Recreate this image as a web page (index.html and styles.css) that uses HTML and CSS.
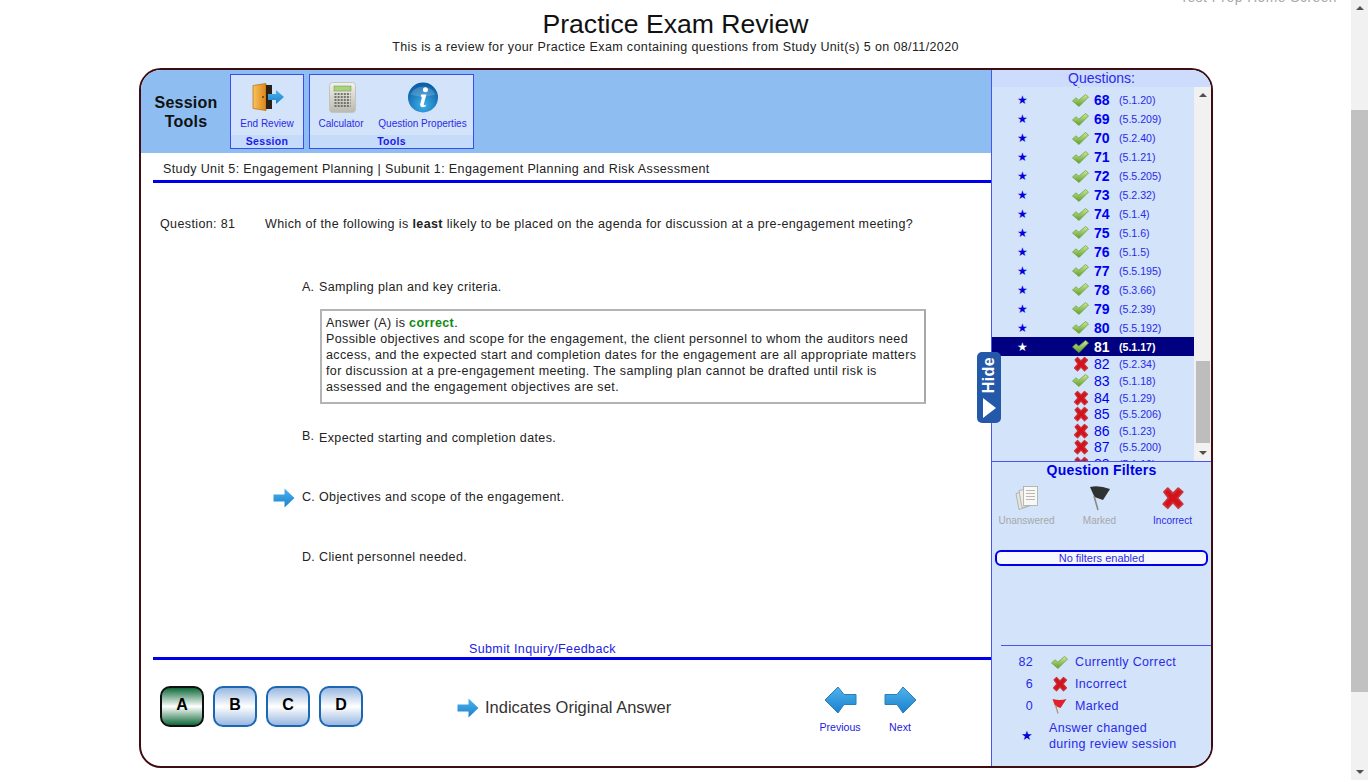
FILE: index.html
```html
<!DOCTYPE html>
<html lang="en">
<head>
    <meta charset="UTF-8">
    <meta name="viewport" content="width=device-width, initial-scale=1.0">
    <title>Practice Exam Review</title>
    <link rel="stylesheet" href="styles.css">
</head>
<body>
    <svg class="defs" width="0" height="0">
        <defs>
            <linearGradient id="g-check" x1="0" y1="0" x2="0" y2="1">
                <stop offset="0" stop-color="#cfe89a"/>
                <stop offset="1" stop-color="#5f9e2c"/>
            </linearGradient>
            <linearGradient id="g-arrow" x1="0" y1="0" x2="0" y2="1">
                <stop offset="0" stop-color="#4db4ee"/>
                <stop offset="1" stop-color="#1b80cc"/>
            </linearGradient>
            <linearGradient id="g-door" x1="0" y1="0" x2="1" y2="0">
                <stop offset="0" stop-color="#fbc25a"/>
                <stop offset="1" stop-color="#d9861c"/>
            </linearGradient>
            <linearGradient id="g-calc" x1="0" y1="0" x2="0" y2="1">
                <stop offset="0" stop-color="#f2f2ec"/>
                <stop offset="1" stop-color="#b9b9b0"/>
            </linearGradient>
            <radialGradient id="g-info" cx="0.5" cy="0.75" r="0.7">
                <stop offset="0" stop-color="#3fb0ea"/>
                <stop offset="1" stop-color="#0b5ea6"/>
            </radialGradient>
            <symbol id="i-check" viewBox="0 0 17 13">
                <path d="M0.5 7 L4 3.8 L6.8 6.2 L13.5 0.5 L16.5 3 L7 12.5 Z" fill="url(#g-check)" stroke="#6fa53a" stroke-width="0.8" stroke-linejoin="round"/>
            </symbol>
            <symbol id="i-cross" viewBox="0 0 16 16">
                <path d="M2 4 L4.5 1.5 L8 5 L11.5 1.5 L14.5 4 L11 8 L14.5 12 L11.5 14.8 L8 11 L4.5 14.8 L1.5 12 L5 8 Z" fill="#d4121c" stroke="#c9343a" stroke-width="1.2" stroke-linejoin="round"/>
            </symbol>
            <symbol id="i-right" viewBox="0 0 22 20">
                <path d="M0.5 6.5 H11.5 V0.5 L21.5 10 L11.5 19.5 V13.5 H0.5 Z" fill="url(#g-arrow)"/>
            </symbol>
            <symbol id="i-nav" viewBox="0 0 33 28">
                <path d="M1 14 L14 1 L20 8.5 H32 V18.5 H20 L14 27 Z" fill="url(#g-arrow)" stroke="#2a7fb8" stroke-width="1" stroke-linejoin="round"/>
            </symbol>
        </defs>
    </svg>

    <div class="page">
        <a class="home-link">Test Prep Home Screen</a>
        <header class="page-head">
            <h1>Practice Exam Review</h1>
            <p>This is a review for your Practice Exam containing questions from Study Unit(s) 5 on 08/11/2020</p>
        </header>

        <div class="exam">
            <section class="main-col">
                <div class="toolbar">
                    <div class="toolbar-title">Session<br>Tools</div>
                    <div class="tool-group group-session">
                        <div class="tool-items">
                            <div class="tool">
                                <svg class="door" width="33" height="31" viewBox="0 0 33 31">
                                    <path d="M1 3.5 L14 1.5 V28.5 L1 26.5 Z" fill="url(#g-door)" stroke="#b36f14" stroke-width="0.7"/>
                                    <path d="M14 3 H20 V27 H14 Z" fill="#2a2018"/>
                                    <circle cx="11" cy="15" r="1" fill="#6a3c08"/>
                                    <path d="M16 12 H24 V8 L32 15 L24 22 V18 H16 Z" fill="url(#g-arrow)"/>
                                </svg>
                                <span>End Review</span>
                            </div>
                        </div>
                        <div class="group-name">Session</div>
                    </div>
                    <div class="tool-group group-tools">
                        <div class="tool-items">
                            <div class="tool tool-calc">
                                <svg class="calc" width="27" height="31" viewBox="0 0 27 31">
                                    <rect x="0.5" y="0.5" width="26" height="30" rx="3" fill="url(#g-calc)" stroke="#c4c4bc"/>
                                    <rect x="5" y="4" width="17" height="5" fill="#a9d27a" stroke="#6f8a58" stroke-width="0.5"/>
                                    <path d="M5.5 12 H21.5 M5.5 15 H21.5 M5.5 18 H21.5 M5.5 21 H21.5 M5.5 24 H21.5" stroke="#55554f" stroke-width="1.7" stroke-dasharray="2 1.1"/>
                                </svg>
                                <span>Calculator</span>
                            </div>
                            <div class="tool tool-props">
                                <svg width="32" height="32" viewBox="0 0 32 32">
                                    <circle cx="16" cy="16" r="15.5" fill="url(#g-info)"/>
                                    <path d="M3 13 A13.5 11 0 0 1 29 13 A20 9 0 0 1 3 13 Z" fill="#fff" opacity="0.18"/>
                                    <circle cx="18.5" cy="8" r="2.6" fill="#fff"/>
                                    <path d="M14 13 H19.5 L16.8 23 Q16.6 24.6 19 23.4 L18.6 25.4 Q13 27.4 13 23.6 L14.9 15.2 H13.6 Z" fill="#fff"/>
                                </svg>
                                <span>Question Properties</span>
                            </div>
                        </div>
                        <div class="group-name">Tools</div>
                    </div>
                </div>

                <div class="unit-title">Study Unit 5: Engagement Planning | Subunit 1: Engagement Planning and Risk Assessment</div>

                <div class="question">
                    <div class="question-no">Question: 81</div>
                    <div class="question-text">Which of the following is <b>least</b> likely to be placed on the agenda for discussion at a pre-engagement meeting?</div>
                </div>

                <div class="options">
                    <div class="option option-a">
                        <span class="opt-mark"></span><span class="opt-letter">A.</span><span>Sampling plan and key criteria.</span>
                    </div>
                    <div class="explain">
                        Answer (A) is <b class="correct">correct</b>.<br>
                        Possible objectives and scope for the engagement, the client personnel to whom the auditors need access, and the expected start and completion dates for the engagement are all appropriate matters for discussion at a pre-engagement meeting. The sampling plan cannot be drafted until risk is assessed and the engagement objectives are set.
                    </div>
                    <div class="option option-b">
                        <span class="opt-mark"></span><span class="opt-letter">B.</span><span>Expected starting and completion dates.</span>
                    </div>
                    <div class="option option-c">
                        <span class="opt-mark"><svg width="22" height="20"><use href="#i-right"/></svg></span><span class="opt-letter">C.</span><span>Objectives and scope of the engagement.</span>
                    </div>
                    <div class="option option-d">
                        <span class="opt-mark"></span><span class="opt-letter">D.</span><span>Client personnel needed.</span>
                    </div>
                </div>

                <div class="feedback">Submit Inquiry/Feedback</div>

                <div class="bottom-bar">
                    <div class="answer-btns">
                        <div class="answer-btn picked">A</div>
                        <div class="answer-btn">B</div>
                        <div class="answer-btn">C</div>
                        <div class="answer-btn">D</div>
                    </div>
                    <div class="legend-arrow">
                        <svg width="22" height="20"><use href="#i-right"/></svg>
                        <span>Indicates Original Answer</span>
                    </div>
                    <div class="nav-btns">
                        <div class="nav-btn">
                            <svg width="33" height="28"><use href="#i-nav"/></svg>
                            <span>Previous</span>
                        </div>
                        <div class="nav-btn">
                            <svg class="flip" width="33" height="28"><use href="#i-nav"/></svg>
                            <span>Next</span>
                        </div>
                    </div>
                </div>
            </section>

            <div class="hide-tab"><span class="hide-text">Hide</span><span class="hide-arrow"></span></div>

            <aside class="side">
                <div class="side-head">Questions:</div>
                <div class="list-wrap">
                    <div class="q-list" id="q-list"></div>
                    <div class="list-scroll">
                        <span class="arrow-up"></span>
                        <div class="list-track"><div class="list-thumb"></div></div>
                        <span class="arrow-down"></span>
                    </div>
                </div>

                <div class="filters">
                    <div class="filters-title">Question Filters</div>
                    <div class="filter-items">
                        <div class="filter off">
                            <svg width="26" height="25" viewBox="0 0 26 25">
                                <path d="M2 8 L12 5 L14 21 L5 24 Z" fill="#e4e4de" stroke="#a0a096" stroke-width="0.7"/>
                                <path d="M5 5 L15 3 L17 20 L8 22 Z" fill="#eeeeea" stroke="#a0a096" stroke-width="0.7"/>
                                <rect x="9.5" y="1" width="14" height="19" fill="#f8f8f6" stroke="#a0a096" stroke-width="0.7"/>
                                <path d="M12 5 H21 M12 8 H21 M12 11 H21 M12 14 H21" stroke="#b8b8b0"/>
                            </svg>
                            <span>Unanswered</span>
                        </div>
                        <div class="filter off">
                            <svg width="22" height="26" viewBox="0 0 22 26">
                                <path d="M1 2 Q10 0 21 4 L14 15 L5.5 12 Z" fill="#2e3230"/>
                                <path d="M5 11 L9 25" stroke="#8a8a80" stroke-width="1.6"/>
                            </svg>
                            <span>Marked</span>
                        </div>
                        <div class="filter">
                            <svg width="24" height="24" viewBox="0 0 16 16"><use href="#i-cross"/></svg>
                            <span>Incorrect</span>
                        </div>
                    </div>
                    <div class="filter-status">No filters enabled</div>
                </div>

                <div class="summary">
                    <div class="sum-row">
                        <span class="sum-num">82</span>
                        <span class="sum-icon"><svg width="17" height="13"><use href="#i-check"/></svg></span>
                        <span>Currently Correct</span>
                    </div>
                    <div class="sum-row">
                        <span class="sum-num">6</span>
                        <span class="sum-icon"><svg width="16" height="16"><use href="#i-cross"/></svg></span>
                        <span>Incorrect</span>
                    </div>
                    <div class="sum-row">
                        <span class="sum-num">0</span>
                        <span class="sum-icon">
                            <svg width="15" height="16" viewBox="0 0 15 16">
                                <path d="M0.5 1 Q8 3 14.5 1 L8.5 10 L3 8 Z" fill="#e0202a"/>
                                <path d="M3.5 7 L6 15.5" stroke="#b09a70" stroke-width="1.3"/>
                            </svg>
                        </span>
                        <span>Marked</span>
                    </div>
                    <div class="sum-note">
                        <span class="sum-star">★</span>
                        <span>Answer changed<br>during review session</span>
                    </div>
                </div>
            </aside>
        </div>
    </div>

    <div class="page-scroll">
        <span class="arrow-up"></span>
        <div class="page-track"><div class="page-thumb"></div></div>
        <span class="arrow-down"></span>
    </div>

    <script src="list.js"></script>
</body>
</html>
```

FILE: list.js
```js
// question list rows, short rows are the ones after the current question
const questions = [
    [67, '5.1.12', 'check', 'first'],
    [68, '5.1.20', 'check'], [69, '5.5.209', 'check'], [70, '5.2.40', 'check'],
    [71, '5.1.21', 'check'], [72, '5.5.205', 'check'], [73, '5.2.32', 'check'],
    [74, '5.1.4', 'check'], [75, '5.1.6', 'check'], [76, '5.1.5', 'check'],
    [77, '5.5.195', 'check'], [78, '5.3.66', 'check'], [79, '5.2.39', 'check'],
    [80, '5.5.192', 'check'], [81, '5.1.17', 'check', 'current'],
    [82, '5.2.34', 'cross', 'short'], [83, '5.1.18', 'check', 'short'],
    [84, '5.1.29', 'cross', 'short'], [85, '5.5.206', 'cross', 'short'],
    [86, '5.1.23', 'cross', 'short'], [87, '5.5.200', 'cross', 'short'],
    [88, '5.1.19', 'cross', 'short']
];

const list = document.getElementById('q-list');
list.innerHTML = questions.map(function (q) {
    const size = q[2] === 'check' ? 'width="17" height="13"' : 'width="16" height="16"';
    const star = q[3] === 'short' ? '' : '★';
    return '<div class="q-row ' + (q[3] || '') + '">' +
        '<span class="q-star">' + star + '</span>' +
        '<span class="q-icon"><svg ' + size + '><use href="#i-' + q[2] + '"/></svg></span>' +
        '<span class="q-num">' + q[0] + '</span>' +
        '<span class="q-ref">(' + q[1] + ')</span>' +
        '</div>';
}).join('');
```

FILE: styles.css
```css
* {
    box-sizing: border-box;
}
html, body {
    height: 100%;
    margin: 0;
}
body {
    display: flex;
    overflow: hidden;
    background: #fff;
    color: #222;
    font-family: "Liberation Sans", Arial, sans-serif;
    font-size: 12.5px;
    letter-spacing: .38px;
}
.defs {
    position: absolute;
}
.page {
    position: relative;
    flex: 1;
}
.home-link {
    position: absolute;
    top: -10px;
    right: 14px;
    color: #a8a8a8;
    font-size: 13.8px;
    letter-spacing: .5px;
}
.page-head {
    height: 68px;
    padding-top: 9px;
    text-align: center;
}
.page-head h1 {
    margin: 0;
    color: #111;
    font-size: 26.6px;
    font-weight: normal;
    line-height: 30px;
    letter-spacing: 0;
}
.page-head p {
    margin: 1px 0 0;
    line-height: 15px;
}

/* exam frame */
.exam {
    position: relative;
    display: flex;
    width: 1074px;
    height: 700px;
    margin-left: 139px;
    border: 2px solid #3e0d12;
    border-radius: 22px;
    overflow: hidden;
}
.main-col {
    display: flex;
    flex-direction: column;
    width: 850px;
}
.toolbar {
    display: flex;
    align-items: flex-start;
    gap: 5px;
    height: 83px;
    padding: 4px 0 0 0;
    background: #8ebdf2;
}
.toolbar-title {
    width: 84px;
    padding-top: 19px;
    padding-left: 6px;
    color: #111;
    font-size: 16px;
    font-weight: bold;
    line-height: 19px;
    text-align: center;
    letter-spacing: .2px;
}
.tool-group {
    display: flex;
    flex-direction: column;
    height: 75px;
    border: 1px solid #3a4df2;
    background: #d2e3fa;
    letter-spacing: 0;
}
.group-session {
    width: 74px;
}
.group-tools {
    width: 165px;
}
.tool-items {
    display: flex;
    flex: 1;
}
.tool {
    display: flex;
    flex: 1;
    flex-direction: column;
    align-items: center;
    padding-top: 7px;
    color: #2a2ae8;
    font-size: 10px;
    white-space: nowrap;
}
.tool svg {
    height: 31px;
    margin-bottom: 5px;
}
.tool svg.door, .tool svg.calc {
    margin-left: 2px;
}
.tool-calc {
    flex: none;
    width: 62px;
}
.group-name {
    height: 13px;
    background: #c4dbfa;
    color: #1a1ae6;
    font-size: 10.5px;
    font-weight: bold;
    line-height: 13px;
    text-align: center;
    letter-spacing: .3px;
}
.unit-title {
    height: 30px;
    margin-left: 12px;
    padding: 8px 0 0 10px;
    border-bottom: 3px solid #0000ee;
    line-height: 16px;
}
.question {
    display: flex;
    height: 97px;
    padding: 34px 0 0 19px;
    line-height: 15px;
}
.question-no {
    width: 105px;
}
.option {
    display: flex;
    line-height: 15px;
}
.opt-mark {
    display: flex;
    align-items: center;
    width: 161px;
    height: 15px;
    padding-left: 132px;
}
.opt-letter {
    width: 17px;
    letter-spacing: .1px;
}
.option-a {
    height: 29px;
}
.option-b {
    height: 59px;
}
.option-b .opt-letter {
    margin-top: -2px;
}
.option-c {
    height: 60px;
}
.explain {
    width: 606px;
    height: 95px;
    margin: 0 0 27px 179px;
    padding: 4px 4px 0 4px;
    border: 2px solid #b4b4b4;
    border-right-color: #a8a8a8;
    line-height: 16px;
}
.correct {
    color: #118a11;
}
.options {
    height: 362px;
}
.feedback {
    height: 15px;
    padding-right: 47px;
    color: #2222e0;
    line-height: 15px;
    text-align: center;
}
.bottom-bar {
    display: flex;
    flex: 1;
    margin-left: 12px;
    padding-top: 26px;
    border-top: 3px solid #0000ee;
    letter-spacing: 0;
}
.answer-btns {
    display: flex;
    gap: 9px;
    width: 304px;
    padding-left: 7px;
}
.answer-btn {
    width: 44px;
    height: 41px;
    border: 2px solid #1b67b5;
    border-radius: 10px;
    background: linear-gradient(#99b8e0, #fff 50%, #99b8e0);
    color: #000;
    font-size: 16px;
    font-weight: bold;
    line-height: 33px;
    text-align: center;
}
.answer-btn.picked {
    border-color: #101010;
    background: linear-gradient(#0f6a3a, #fff 50%, #0f6a3a);
}
.legend-arrow {
    display: flex;
    align-items: center;
    gap: 6px;
    width: 361px;
    height: 43px;
    color: #333;
    font-size: 16.5px;
}
.nav-btns {
    display: flex;
    gap: 16px;
}
.nav-btn {
    display: flex;
    flex-direction: column;
    align-items: center;
    width: 44px;
    color: #2222e0;
    font-size: 10.6px;
}
.nav-btn svg {
    margin-bottom: 7px;
}
.flip {
    transform: scaleX(-1);
}

/* right panel */
.side {
    display: flex;
    flex-direction: column;
    width: 220px;
    border-left: 1px solid #4a55ee;
    background: #d2e3fa;
    color: #2a2ae8;
    letter-spacing: 0;
}
.hide-tab {
    position: absolute;
    top: 282px;
    left: 836px;
    display: flex;
    flex-direction: column;
    align-items: center;
    width: 24px;
    height: 71px;
    padding-top: 5px;
    border-radius: 5px;
    background: #2458a8;
    color: #fff;
    font-size: 16px;
    font-weight: bold;
    z-index: 2;
}
.hide-text {
    writing-mode: vertical-rl;
    transform: rotate(180deg);
    line-height: 20px;
}
.hide-arrow {
    width: 0;
    height: 0;
    margin-top: 5px;
    border-top: 10px solid transparent;
    border-bottom: 10px solid transparent;
    border-left: 13px solid #fff;
}
.side-head {
    height: 17px;
    background: #cddcfd;
    font-size: 14px;
    line-height: 17px;
    text-align: center;
}
.list-wrap {
    display: flex;
    height: 375px;
    border-bottom: 1px solid #4a55ee;
}
.q-list {
    width: 202px;
    height: 374px;
    overflow: hidden;
}
.q-row {
    display: flex;
    align-items: center;
    height: 18.95px;
}
.q-row.first {
    margin-top: -15px;
}
.q-row.short {
    height: 16.6px;
}
.q-row.current {
    background: #000080;
    color: #fff;
}
.q-star {
    width: 60px;
    color: #0000e0;
    font-size: 12px;
    text-align: center;
    line-height: 1;
}
.q-icon {
    display: flex;
    align-items: center;
    justify-content: center;
    width: 17px;
    margin-left: 20px;
}
.q-num {
    width: 25px;
    margin-left: 5px;
    color: #0000ee;
    font-size: 14px;
    line-height: 16px;
}
.q-ref {
    font-size: 10.6px;
}
.q-row.current .q-star,
.q-row.current .q-num,
.q-row.current .q-ref {
    color: #fff;
    font-weight: bold;
}
.q-row.current .q-star {
    font-weight: normal;
}
.q-row:not(.short) .q-num {
    font-weight: bold;
}
.list-scroll {
    display: flex;
    flex: 1;
    flex-direction: column;
    align-items: center;
    background: #f1f1f1;
}
.arrow-up, .arrow-down {
    flex: none;
    width: 0;
    height: 0;
    margin: 6px 0;
    border-left: 4px solid transparent;
    border-right: 4px solid transparent;
}
.arrow-up {
    border-bottom: 4px solid #505050;
}
.arrow-down {
    border-top: 4px solid #505050;
}
.list-track {
    display: flex;
    flex: 1;
    flex-direction: column;
    justify-content: flex-end;
    width: 100%;
    padding: 0 1px 2px 2px;
}
.list-thumb {
    height: 82px;
    background: #bdbdbd;
}
.filters {
    height: 183px;
    padding-top: 1px;
}
.filters-title {
    color: #0000e6;
    font-size: 14px;
    font-weight: bold;
    line-height: 14px;
    text-align: center;
    letter-spacing: .2px;
}
.filter-items {
    display: flex;
    height: 73px;
    padding-top: 8px;
    margin-left: -2px;
}
.filter {
    display: flex;
    flex-direction: column;
    align-items: center;
    width: 73px;
    font-size: 10px;
}
.filter svg {
    height: 26px;
    margin-bottom: 4px;
}
.filter.off {
    color: #a8a8a8;
}
.filter-status {
    height: 16px;
    margin: 0 3px;
    border: 2px solid #0000e6;
    border-radius: 6px;
    background: #f6f7ff;
    font-size: 11px;
    line-height: 12px;
    text-align: center;
}
.summary {
    flex: 1;
    margin-left: 9px;
    padding-top: 5px;
    border-top: 1px solid #4a55ee;
    letter-spacing: .35px;
}
.sum-row {
    display: flex;
    align-items: center;
    height: 22px;
}
.sum-num {
    width: 32px;
    text-align: right;
}
.sum-icon {
    display: flex;
    align-items: center;
    justify-content: center;
    width: 17px;
    margin: 0 7px 0 18px;
}
.sum-note {
    display: flex;
    align-items: center;
    margin-top: 3px;
    line-height: 16px;
}
.sum-star {
    width: 48px;
    padding-left: 20px;
    color: #0000e0;
}

/* page scrollbar */
.page-scroll {
    display: flex;
    flex: none;
    flex-direction: column;
    align-items: center;
    width: 17px;
    background: #f1f1f1;
}
.page-track {
    flex: 1;
    width: 100%;
    padding-top: 94px;
    padding-bottom: 72px;
}
.page-thumb {
    height: 100%;
    background: #c1c1c1;
}
```
